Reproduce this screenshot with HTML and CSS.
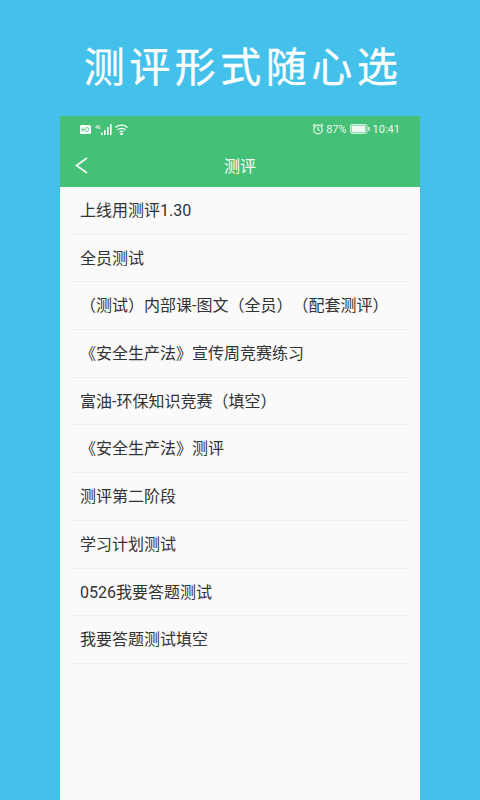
FILE: index.html
```html
<!DOCTYPE html>
<html lang="zh-CN">
<head>
    <meta charset="UTF-8">
    <meta name="viewport" content="width=device-width, initial-scale=1.0">
    <title>测评</title>
    <link rel="stylesheet" href="styles.css">
</head>
<body>
    <h1 class="headline">测评形式随心选</h1>
    <div class="phone">
        <div class="app-top">
            <div class="status-bar">
                <div class="status-left">
                    <svg class="icon-hd" width="11" height="9" viewBox="0 0 11 9">
                        <rect x="0" y="0" width="11" height="9" rx="1.500" fill="#fff"/>
                        <path d="M2 2.500v4M2 4.500h2M4 2.500v4M6 2.500v4h1.500l1.200-1V3.500l-1.200-1z" stroke="#45c177" stroke-width="0.800" fill="none"/>
                    </svg>
                    <span class="net">46</span>
                    <svg class="icon-signal" width="12" height="11" viewBox="0 0 12 11">
                        <rect x="0" y="8.500" width="1.600" height="2.500" fill="#fff"/>
                        <rect x="3" y="6" width="1.600" height="5" fill="#fff"/>
                        <rect x="6" y="3" width="1.600" height="8" fill="#fff"/>
                        <rect x="9" y="0" width="1.600" height="11" fill="#fff"/>
                    </svg>
                    <svg class="icon-wifi" width="13" height="11" viewBox="0 0 13 11" fill="none" stroke="#fff" stroke-width="1.200">
                        <path d="M.5 3.500C3.800.4 9.200.4 12.500 3.500"/>
                        <path d="M2.500 5.800C4.700 3.900 8.300 3.900 10.500 5.800"/>
                        <path d="M4.500 8C5.700 7 7.300 7 8.500 8"/>
                        <circle cx="6.500" cy="10" r=".7" fill="#fff"/>
                    </svg>
                </div>
                <div class="status-right">
                    <svg width="12" height="12" viewBox="0 0 12 12" fill="none" stroke="#fff" stroke-width="1.200">
                        <circle cx="6" cy="6.500" r="4.300"/>
                        <path d="M6 4v2.700l1.700 1.100M.8 3L3 .8M11.200 3L9 .8"/>
                    </svg>
                    <span>87%</span>
                    <svg class="icon-battery" width="20" height="10" viewBox="0 0 20 10">
                        <rect x=".5" y=".5" width="16.500" height="9" rx="1.500" fill="none" stroke="#fff" opacity=".8"/>
                        <rect x="1.500" y="1.500" width="14" height="7" fill="#fff"/>
                        <rect x="18.300" y="3" width="1.300" height="4" fill="#fff"/>
                    </svg>
                    <span>10:41</span>
                </div>
            </div>
            <div class="nav-bar">
                <svg class="back" width="13" height="17" viewBox="0 0 13 17" fill="none" stroke="#fff" stroke-width="1.600">
                    <path d="M12 1L1.500 8.500 12 16"/>
                </svg>
                <span class="nav-title">测评</span>
            </div>
        </div>
        <ul class="list">
            <li>上线用测评1.30</li>
            <li>全员测试</li>
            <li>（测试）内部课-图文（全员）（配套测评）</li>
            <li>《安全生产法》宣传周竞赛练习</li>
            <li>富油-环保知识竞赛（填空）</li>
            <li>《安全生产法》测评</li>
            <li>测评第二阶段</li>
            <li>学习计划测试</li>
            <li>0526我要答题测试</li>
            <li>我要答题测试填空</li>
        </ul>
    </div>
</body>
</html>
```

FILE: styles.css
```css
html, body {
    margin: 0;
    height: 800px;
    overflow: hidden;
}
body {
    background-color: #44c1ea;
    font-family: Roboto, "Noto Sans CJK SC", sans-serif;
    display: flex;
    flex-direction: column;
    align-items: center;
}
.headline {
    margin: 0;
    height: 116px;
    padding-left: 6px;
    line-height: 136px;
    font-size: 41px;
    font-weight: 400;
    letter-spacing: 4.500px;
    color: #fff;
    box-sizing: border-box;
    -webkit-text-stroke: 0.3px #fff;
}
.phone {
    width: 360px;
    flex: 1;
    background-color: #fafafa;
}
.app-top {
    height: 71px;
    background-color: #45c177;
    color: #fff;
}
.status-bar {
    height: 26px;
    padding: 0 20px;
    display: flex;
    justify-content: space-between;
    align-items: center;
    font-size: 11px;
}
.status-left, .status-right {
    display: flex;
    align-items: center;
}
.status-right {
    gap: 2px;
    opacity: 0.9;
}
.net {
    font-size: 5px;
    margin-left: 4px;
    align-self: flex-start;
}
.icon-wifi {
    margin-left: 2px;
}
.icon-battery {
    margin: 0 1px;
}
.nav-bar {
    height: 45px;
    position: relative;
    display: flex;
    justify-content: center;
    align-items: center;
}
.back {
    position: absolute;
    left: 15px;
    top: 15px;
}
.nav-title {
    font-size: 16px;
}
.list {
    list-style: none;
    margin: 0;
    padding: 0 11px;
}
.list li {
    height: 47.700px;
    line-height: 47px;
    box-sizing: border-box;
    padding-left: 9px;
    border-bottom: 1px solid #f0f0f0;
    font-size: 16px;
    color: #333;
    white-space: nowrap;
    text-spacing-trim: space-all;
}
```
